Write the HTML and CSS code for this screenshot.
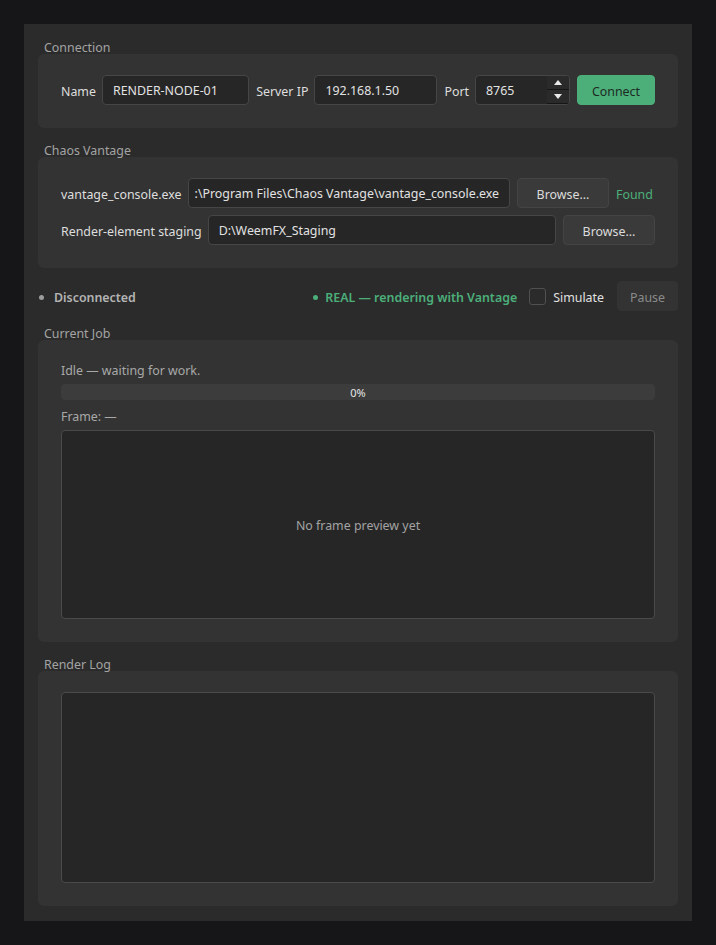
FILE: index.html
```html
<!DOCTYPE html>
<html>
<head>
<meta charset="utf-8">
<link rel="stylesheet" href="styles.css">
</head>
<body>
<div class="window">
  <div class="group-title">Connection</div>
  <div class="group">
    <div class="row">
      <span class="label">Name</span>
      <div class="input name-input">RENDER-NODE-01</div>
      <span class="label gap-left">Server IP</span>
      <div class="input ip-input">192.168.1.50</div>
      <span class="label gap-left">Port</span>
      <div class="input spin">
        <span class="spin-value">8765</span>
        <div class="spin-buttons">
          <div class="spin-btn"><span class="tri-up"></span></div>
          <div class="spin-btn"><span class="tri-down"></span></div>
        </div>
      </div>
      <div class="btn btn-green gap-left">Connect</div>
    </div>
  </div>

  <div class="group-title">Chaos Vantage</div>
  <div class="group">
    <div class="row">
      <span class="label">vantage_console.exe</span>
      <div class="input grow end"><span>:\Program Files\Chaos Vantage\vantage_console.exe</span></div>
      <div class="btn browse1 gap-left">Browse...</div>
      <span class="found gap-left">Found</span>
    </div>
    <div class="row">
      <span class="label">Render-element staging</span>
      <div class="input grow">D:\WeemFX_Staging</div>
      <div class="btn browse2 gap-left">Browse...</div>
    </div>
  </div>

  <div class="status-row">
    <span class="dot dot-grey"></span>
    <span class="status-text">Disconnected</span>
    <span class="spacer"></span>
    <span class="dot dot-green"></span>
    <span class="real-text">REAL — rendering with Vantage</span>
    <span class="checkbox"></span>
    <span class="sim-label">Simulate</span>
    <div class="btn btn-pause">Pause</div>
  </div>

  <div class="group-title">Current Job</div>
  <div class="group job">
    <div class="muted line">Idle — waiting for work.</div>
    <div class="progress">0%</div>
    <div class="muted line">Frame: —</div>
    <div class="preview">No frame preview yet</div>
  </div>

  <div class="group-title">Render Log</div>
  <div class="group">
    <div class="log"></div>
  </div>
</div>
</body>
</html>
```

FILE: styles.css
```css
* { box-sizing: border-box; }
html, body { margin: 0; padding: 0; }
body {
  background: #161618;
  width: 716px;
  height: 945px;
  padding: 24px;
  font-family: "Noto Sans", "Open Sans", sans-serif;
  font-size: 12.4px;
  color: #dcdcdc;
}
.window {
  width: 668px;
  height: 897px;
  background: #2b2b2b;
  padding: 14px 14px 15px;
  display: flex;
  flex-direction: column;
}
.group-title {
  height: 16px;
  line-height: 19px;
  padding-left: 6px;
  color: #a3a3a3;
  position: relative;
  z-index: 1;
}
.group {
  background: #333333;
  border-radius: 6px;
  padding: 21px 23px 23px;
  margin-bottom: 13px;
  display: flex;
  flex-direction: column;
  gap: 7px;
}
.row {
  display: flex;
  align-items: center;
  gap: 6px;
  height: 30px;
  padding-top: 2px;
}
.row > .input, .row > .btn { margin-top: -2px; }
.gap-left { margin-left: 1px; }
.label { white-space: nowrap; color: #dedede; }
.input {
  height: 30px;
  background: #262626;
  border: 1px solid #464646;
  border-radius: 4px;
  padding: 0 10px;
  line-height: 30px;
  color: #e2e2e2;
  white-space: nowrap;
  overflow: hidden;
}
.input.end {
  display: flex;
  justify-content: flex-end;
}
.input.end span { flex: none; }
.name-input { flex: 1; }
.ip-input { width: 123px; }
.grow { flex: 1; }
.spin {
  width: 95px;
  display: flex;
  padding: 0 0 0 10px;
}
.spin-value { flex: 1; }
.spin-buttons {
  width: 22px;
  display: flex;
  flex-direction: column;
}
.spin-btn {
  flex: 1;
  background: #2a2a2a;
  border-bottom: 1px solid #151515;
  display: flex;
  align-items: center;
  justify-content: center;
}
.tri-up {
  width: 0; height: 0;
  border-left: 4px solid transparent;
  border-right: 4px solid transparent;
  border-bottom: 5px solid #e8e8e8;
}
.tri-down {
  width: 0; height: 0;
  border-left: 4px solid transparent;
  border-right: 4px solid transparent;
  border-top: 5px solid #e8e8e8;
}
.btn {
  height: 30px;
  border-radius: 4px;
  background: #3a3a3a;
  border: 1px solid #444;
  color: #dcdcdc;
  display: flex;
  align-items: center;
  justify-content: center;
  white-space: nowrap;
  padding-top: 2px;
}
.btn-green {
  width: 78px;
  background: #4caf7a;
  border-color: #4caf7a;
  color: #1c2a22;
}
.browse1 { width: 92px; }
.browse2 { width: 92px; }
.found { color: #4caf7a; width: 39px; }
.status-row {
  height: 30px;
  display: flex;
  align-items: center;
  margin-bottom: 13px;
  padding-top: 2px;
}
.status-row > .btn { margin-top: -2px; }
.dot {
  width: 5px; height: 5px; border-radius: 50%;
  display: inline-block;
}
.dot-grey { background: #9c9c9c; margin-left: 1px; margin-right: 10px; }
.dot-green { background: #4caf7a; margin-right: 7px; }
.status-text { color: #b4b4b4; font-weight: 600; }
.spacer { flex: 1; }
.real-text { color: #4caf7a; font-weight: 600; margin-right: 12px; }
.checkbox {
  width: 17px; height: 17px;
  border: 1px solid #505050;
  border-radius: 3px;
  background: #2b2b2b;
  margin-right: 7px;
  margin-top: -2px;
}
.sim-label { color: #e0e0e0; margin-right: 13px; }
.btn-pause {
  width: 61px;
  background: #333333;
  border-color: #333333;
  color: #8a8a8a;
}
.job { gap: 7px; }
.line { height: 16px; line-height: 20px; }
.muted { color: #a8a8a8; }
.progress {
  height: 16px;
  background: #3c3c3c;
  border-radius: 4px;
  font-size: 11px;
  line-height: 17px;
  text-align: center;
  color: #e6e6e6;
}
.preview {
  height: 189px;
  background: #262626;
  border: 1px solid #4a4a4a;
  border-radius: 4px;
  display: flex;
  align-items: center;
  justify-content: center;
  color: #a2a2a2;
  padding-top: 2px;
}
.log {
  height: 191px;
  background: #262626;
  border: 1px solid #4a4a4a;
  border-radius: 4px;
}
```
